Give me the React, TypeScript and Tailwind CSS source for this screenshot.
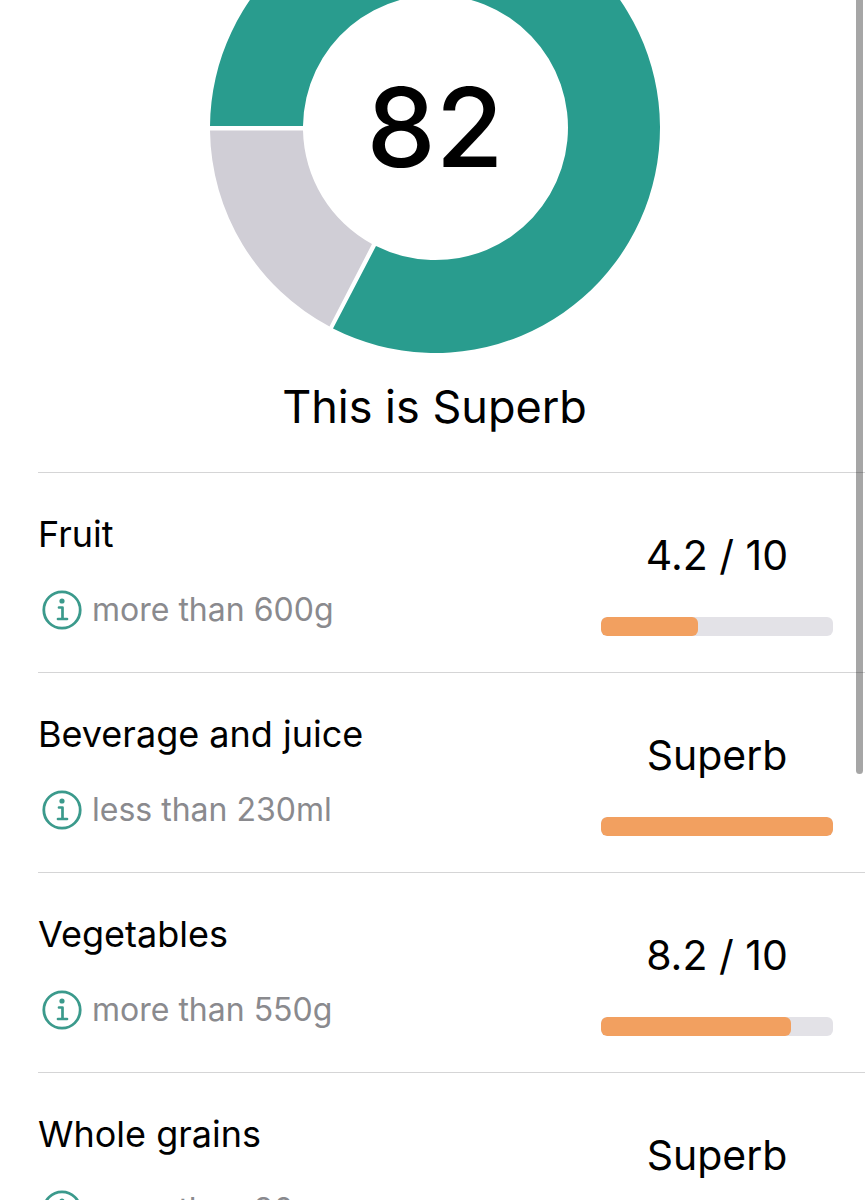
type Category = {
  name: string;
  hint: string;
  score: number;
};

const categories: Category[] = [
  { name: 'Fruit', hint: 'more than 600g', score: 4.2 },
  { name: 'Beverage and juice', hint: 'less than 230ml', score: 10 },
  { name: 'Vegetables', hint: 'more than 550g', score: 8.2 },
  { name: 'Whole grains', hint: 'more than 90g', score: 10 },
];

function ScoreChart() {
  return (
    <svg viewBox="0 0 450 354" className="w-[450px] shrink-0" role="img" aria-label="Total score 82">
      <path d="M0 126A225 225 0 1 1 123 328.500L166 246A132.500 132.500 0 1 0 93 126Z" fill="#299c8e" />
      <path d="M0 130.500A225 225 0 0 0 119.500 326.500L162 244A132.500 132.500 0 0 1 93 130.500Z" fill="#d0ced6" />
      <text x="225" y="167" textAnchor="middle" fontSize="110" fontWeight="500" fill="#000">
        82
      </text>
    </svg>
  );
}

function InfoIcon() {
  return (
    <svg viewBox="0 0 40 40" className="size-10" fill="none" stroke="#3b9a8c" aria-hidden="true">
      <circle cx="20" cy="20" r="18.200" strokeWidth="2.800" />
      <path
        d="M17 17.500H20.500V28.800M16 29H25"
        strokeWidth="2.700"
        strokeLinecap="round"
        strokeLinejoin="round"
      />
      <circle cx="20" cy="11" r="2.600" fill="#3b9a8c" stroke="none" />
    </svg>
  );
}

function CategoryRow({ name, hint, score }: Category) {
  return (
    <li className="flex h-[200px] shrink-0 items-start justify-between border-t border-[#d5d5d6] pr-8">
      <div className="pt-9">
        <h2 className="text-[36px] leading-[50px]">{name}</h2>
        <div className="mt-[31px] flex items-center gap-2.5 pl-1">
          <button type="button" aria-label={`About ${name}`} className="size-10">
            <InfoIcon />
          </button>
          <p className="text-[32px] leading-10 text-[#8a8a8e]">{hint}</p>
        </div>
      </div>
      <div className="w-[232px] pt-14">
        <p className="text-center text-[41px] leading-[52px]">{score === 10 ? 'Superb' : `${score} / 10`}</p>
        <div className="mt-9 h-[19px] overflow-hidden rounded-md bg-[#e3e2e7]">
          <div className="h-full rounded-md bg-[#f2a060]" style={{ width: `${score * 10}%` }} />
        </div>
      </div>
    </li>
  );
}

export default function App() {
  return (
    <main className="relative flex h-screen flex-col overflow-hidden bg-white font-['Inter',sans-serif] text-black">
      <section className="flex shrink-0 flex-col items-center pr-1 pl-2">
        <ScoreChart />
        <h1 className="mt-[22px] mb-[34px] text-[45px] leading-[62px]">This is Superb</h1>
      </section>
      <ul className="flex flex-col pl-[38px]">
        {categories.map((category) => (
          <CategoryRow key={category.name} {...category} />
        ))}
      </ul>
      <div className="absolute top-0 right-0.5 h-[774px] w-[7px] rounded-b-full bg-black/35" />
    </main>
  );
}
